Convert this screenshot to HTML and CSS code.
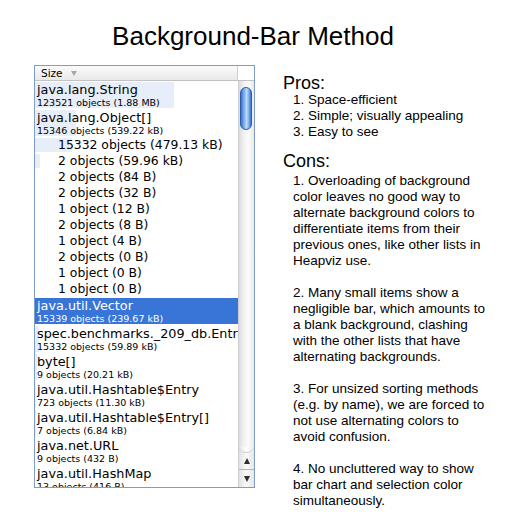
FILE: index.html
```html
<!DOCTYPE html>
<html>
<head>
<meta charset="utf-8">
<link rel="stylesheet" href="styles.css">
</head>
<body>
<div class="page">
  <h1 class="title">Background-Bar Method</h1>
  <div class="content">
    <div class="list">
      <div class="list-head">
        <div class="col-head"><span class="col-label">Size</span><span class="sort-arrow"></span></div>
        <div class="corner"></div>
      </div>
      <div class="list-main">
        <div class="rows">
          <div class="row" style="--w:139px"><div class="name">java.lang.String</div><div class="sub">123521 objects (1.88 MB)</div></div>
          <div class="row" style="--w:41px"><div class="name">java.lang.Object[]</div><div class="sub">15346 objects (539.22 kB)</div></div>
          <div class="subrow" style="--w:37px">15332 objects (479.13 kB)</div>
          <div class="subrow" style="--w:5px">2 objects (59.96 kB)</div>
          <div class="subrow" style="--w:0px">2 objects (84 B)</div>
          <div class="subrow" style="--w:0px">2 objects (32 B)</div>
          <div class="subrow" style="--w:0px">1 object (12 B)</div>
          <div class="subrow" style="--w:0px">2 objects (8 B)</div>
          <div class="subrow" style="--w:0px">1 object (4 B)</div>
          <div class="subrow" style="--w:0px">2 objects (0 B)</div>
          <div class="subrow" style="--w:0px">1 object (0 B)</div>
          <div class="subrow" style="--w:0px">1 object (0 B)</div>
          <div class="row selected"><div class="name">java.util.Vector</div><div class="sub">15339 objects (239.67 kB)</div></div>
          <div class="row" style="--w:4px"><div class="name">spec.benchmarks._209_db.Entry</div><div class="sub">15332 objects (59.89 kB)</div></div>
          <div class="row" style="--w:2px"><div class="name">byte[]</div><div class="sub">9 objects (20.21 kB)</div></div>
          <div class="row" style="--w:1px"><div class="name">java.util.Hashtable$Entry</div><div class="sub">723 objects (11.30 kB)</div></div>
          <div class="row" style="--w:1px"><div class="name">java.util.Hashtable$Entry[]</div><div class="sub">7 objects (6.84 kB)</div></div>
          <div class="row" style="--w:0px"><div class="name">java.net.URL</div><div class="sub">9 objects (432 B)</div></div>
          <div class="row" style="--w:0px"><div class="name">java.util.HashMap</div><div class="sub">13 objects (416 B)</div></div>
        </div>
        <div class="scrollbar">
          <div class="track"><div class="thumb"></div></div>
          <div class="track-end"></div>
          <div class="arrow up"><span class="tri-up"></span></div>
          <div class="arrow down"><span class="tri-down"></span></div>
        </div>
      </div>
    </div>
    <div class="notes">
      <h2 class="heading">Pros:</h2>
      <div class="pros">
        <div>1. Space-efficient</div>
        <div>2. Simple; visually appealing</div>
        <div>3. Easy to see</div>
      </div>
      <h2 class="heading cons-head">Cons:</h2>
      <div class="cons">
        <p>1. Overloading of background<br>color leaves no good way to<br>alternate background colors to<br>differentiate items from their<br>previous ones, like other lists in<br>Heapviz use.</p>
        <p>2. Many small items show a<br>negligible bar, which amounts to<br>a blank background, clashing<br>with the other lists that have<br>alternating backgrounds.</p>
        <p>3. For unsized sorting methods<br>(e.g. by name), we are forced to<br>not use alternating colors to<br>avoid confusion.</p>
        <p>4. No uncluttered way to show<br>bar chart and selection color<br>simultaneously.</p>
      </div>
    </div>
  </div>
</div>
</body>
</html>
```

FILE: styles.css
```css
html, body {
  margin: 0;
  padding: 0;
  background: #ffffff;
}

.page {
  width: 506px;
  height: 521px;
  overflow: hidden;
  padding-top: 21px;
  box-sizing: border-box;
  font-family: "Liberation Sans", Arial, sans-serif;
  color: #000;
}

.title {
  margin: 0;
  font-weight: normal;
  font-size: 26px;
  line-height: 30px;
  text-align: center;
}

.content {
  display: flex;
  align-items: flex-start;
  margin-top: 14px;
}

.list {
  margin-left: 34px;
  width: 221px;
  height: 423px;
  box-sizing: border-box;
  border: 1px solid #7e9cc9;
  display: flex;
  flex-direction: column;
  overflow: hidden;
  font-family: "DejaVu Sans", Verdana, sans-serif;
}

.list-head {
  display: flex;
  height: 15px;
  box-sizing: border-box;
  border-bottom: 1px solid #c2c2c2;
}

.col-head {
  width: 203px;
  box-sizing: border-box;
  border-right: 1px solid #cfcfcf;
  background: linear-gradient(#fbfbfb, #e9e9e9);
  display: flex;
  align-items: center;
  padding-left: 6px;
}

.col-label {
  font-size: 10.5px;
  line-height: 14px;
}

.sort-arrow {
  width: 0;
  height: 0;
  margin-left: 8px;
  margin-top: 1px;
  border-left: 3.5px solid transparent;
  border-right: 3.5px solid transparent;
  border-top: 5px solid #a8a8a8;
}

.corner {
  flex: 1;
  background: #ffffff;
}

.list-main {
  flex: 1;
  display: flex;
  min-height: 0;
}

.rows {
  width: 203px;
  display: flex;
  flex-direction: column;
  overflow: hidden;
  white-space: nowrap;
}

.row {
  flex: none;
  height: 26px;
  margin: 1px 0;
  padding-left: 2px;
  background: linear-gradient(#e7edf9, #e7edf9) no-repeat;
  background-size: var(--w, 0px) 100%;
}

.row.selected {
  background: #3875d7;
  color: #ffffff;
}

.name {
  font-size: 12.8px;
  line-height: 15px;
}

.sub {
  font-size: 9.5px;
  line-height: 11px;
}

.subrow {
  flex: none;
  height: 16px;
  padding-left: 23px;
  font-size: 12.4px;
  line-height: 16px;
  background: linear-gradient(#e7edf9, #e7edf9) no-repeat;
  background-size: var(--w, 0px) 14px;
  background-position: 0 1px;
}

.scrollbar {
  flex: 1;
  display: flex;
  flex-direction: column;
  border-left: 1px solid #cdcdcd;
  background: linear-gradient(to right, #dcdcdc, #f3f3f3 35%, #fbfbfb 65%, #e8e8e8);
}

.track {
  flex: 1;
  padding-top: 6px;
}

.thumb {
  width: 12px;
  height: 43px;
  margin-left: 1px;
  box-sizing: border-box;
  border: 1px solid #2c5cb0;
  border-radius: 6px;
  background: linear-gradient(to right, #3c72cf, #86b6f0 35%, #bcdaf9 55%, #7aabea 80%, #3a6fcc);
}

.track-end {
  height: 6px;
  border-radius: 0 0 8px 8px;
  background: linear-gradient(to right, #e6e6e6, #fdfdfd 50%, #ececec);
  border-bottom: 1px solid #d0d0d0;
}

.arrow {
  height: 17px;
  display: flex;
  align-items: center;
  justify-content: center;
  box-sizing: border-box;
  background: linear-gradient(to right, #e2e2e2, #fafafa 50%, #e6e6e6);
}

.arrow.up {
  border-bottom: 1px solid #b4b4b4;
}

.tri-up {
  width: 0;
  height: 0;
  border-left: 3.5px solid transparent;
  border-right: 3.5px solid transparent;
  border-bottom: 6px solid #2e2e2e;
}

.tri-down {
  width: 0;
  height: 0;
  border-left: 3.5px solid transparent;
  border-right: 3.5px solid transparent;
  border-top: 6px solid #2e2e2e;
}

.notes {
  margin-left: 28px;
  padding-top: 9px;
  white-space: nowrap;
}

.heading {
  margin: 0;
  font-weight: normal;
  font-size: 18px;
  line-height: 18px;
}

.pros {
  padding-left: 10px;
  font-size: 13.5px;
  line-height: 16px;
}

.cons-head {
  margin-top: 12px;
}

.cons {
  margin-top: 3px;
  padding-left: 10px;
  font-size: 13.5px;
  line-height: 16px;
}

.cons p {
  margin: 0 0 16px 0;
}
```
